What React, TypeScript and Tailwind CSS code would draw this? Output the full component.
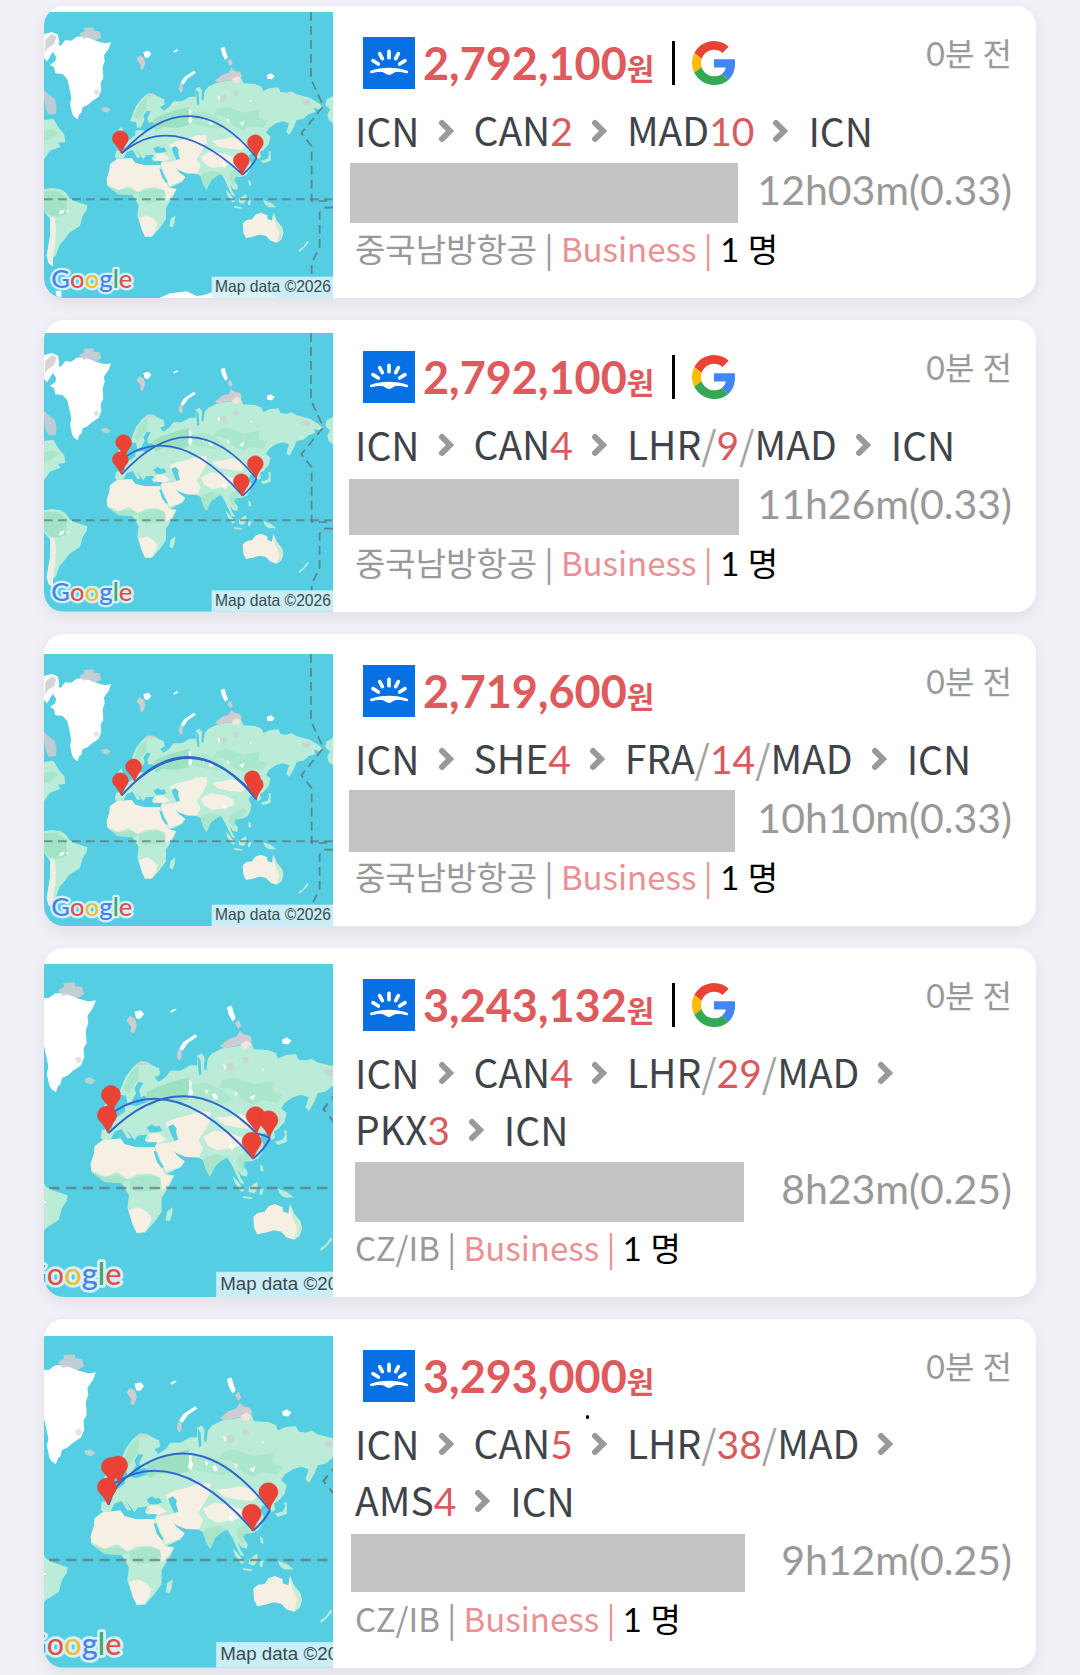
import React from 'react';

type Point = [number, number];

interface Stop {
    code: string;
    days?: string;
    next?: string;
}

interface Offer {
    id: number;
    price: string;
    google: boolean;
    stops: Stop[];
    duration: string;
    airline: string;
    bar: string;
    map: {
        viewBox: string;
        pins: Point[];
        arcs: string[];
    };
    speck?: boolean;
}

const MAD: Point = [271, 418];
const LHR: Point = [281, 367];
const ICN: Point = [676, 430];
const CAN: Point = [634, 484];

const MAD_ICN = 'M275 462Q483 232 680 475';
const MAD_CAN = 'M275 462Q430 330 638 526';
const LHR_CAN = 'M285 410Q444 305 638 526';
const CAN_ICN = 'M638 526Q664 505 680 475';

const OFFERS: Offer[] = [
    {
        id: 1,
        price: '2,792,100',
        google: true,
        stops: [{ code: 'ICN' }, { code: 'CAN', days: '2' }, { code: 'MAD', days: '10' }, { code: 'ICN' }],
        duration: '12h03m(0.33)',
        airline: '중국남방항공',
        bar: 'ml-px w-[388px] h-[60px]',
        map: { viewBox: '0 0 867 858', pins: [MAD, ICN, CAN], arcs: [MAD_ICN, MAD_CAN, CAN_ICN] },
    },
    {
        id: 2,
        price: '2,792,100',
        google: true,
        stops: [{ code: 'ICN' }, { code: 'CAN', days: '4' }, { code: 'LHR', days: '9', next: 'MAD' }, { code: 'ICN' }],
        duration: '11h26m(0.33)',
        airline: '중국남방항공',
        bar: 'w-[390px] h-[56px]',
        map: { viewBox: '0 0 867 836', pins: [LHR, MAD, ICN, CAN], arcs: [MAD_ICN, LHR_CAN, CAN_ICN] },
    },
    {
        id: 3,
        price: '2,719,600',
        google: false,
        stops: [{ code: 'ICN' }, { code: 'SHE', days: '4' }, { code: 'FRA', days: '14', next: 'MAD' }, { code: 'ICN' }],
        duration: '10h10m(0.33)',
        airline: '중국남방항공',
        bar: 'w-[386px] h-[62px]',
        map: {
            viewBox: '0 0 867 816',
            pins: [[311, 377], MAD, [667, 412], ICN],
            arcs: [MAD_ICN, 'M275 462Q484 230 678 473', 'M315 421Q484 256 671 457'],
        },
    },
    {
        id: 4,
        price: '3,243,132',
        google: true,
        stops: [
            { code: 'ICN' },
            { code: 'CAN', days: '4' },
            { code: 'LHR', days: '29', next: 'MAD' },
            { code: 'PKX', days: '3' },
            { code: 'ICN' },
        ],
        duration: '8h23m(0.25)',
        airline: 'CZ/IB',
        bar: 'ml-[6px] w-[389px] h-[60px]',
        map: {
            viewBox: '71 0 725 836',
            pins: [LHR, MAD, [644, 420], ICN, CAN],
            arcs: ['M275 462Q463 276 648 464', 'M648 464Q664 466 680 475', LHR_CAN, CAN_ICN],
        },
    },
    {
        id: 5,
        price: '3,293,000',
        google: false,
        stops: [
            { code: 'ICN' },
            { code: 'CAN', days: '5' },
            { code: 'LHR', days: '38', next: 'MAD' },
            { code: 'AMS', days: '4' },
            { code: 'ICN' },
        ],
        duration: '9h12m(0.25)',
        airline: 'CZ/IB',
        bar: 'ml-[2px] w-[394px] h-[58px]',
        map: {
            viewBox: '71 0 725 832',
            pins: [[299, 363], LHR, MAD, ICN, CAN],
            arcs: ['M275 462Q284 430 302 408', 'M300 410Q489 228 680 475', LHR_CAN, CAN_ICN],
        },
        speck: true,
    },
];

const World: React.FC = () => (
    <g>
        <g fill="#bbecd8">
            {/* Europe and Asia */}
            <path d="M300 366L308 345 318 320 335 298 352 283 370 283 385 292 402 300 404 316 390 322 400 334 418 322 430 306 455 306 480 292 497 292 497 268 508 262 516 272 514 300 520 306 524 276 535 262 560 250 590 245 634 238 640 252 675 254 695 262 700 275 720 266 745 264 752 278 770 280 785 276 800 285 840 295 868 313 878 322 868 330 852 325 856 338 835 345 820 358 800 362 792 382 778 407 769 398 777 372 758 366 738 372 718 385 708 400 722 412 716 435 700 452 690 458 693 474 683 480 676 462 660 464 656 476 664 490 660 512 650 526 636 532 616 534 612 542 624 560 622 572 608 568 600 554 606 574 616 590 606 588 592 560 586 545 572 522 560 530 544 542 536 552 530 572 520 556 512 530 500 524 470 522 445 512 436 504 446 518 466 532 456 548 418 566 410 552 390 512 392 495 398 484 372 486 366 478 372 466 348 468 340 480 330 466 318 452 332 474 322 476 308 452 290 458 280 478 262 480 255 474 258 454 284 452 285 438 273 434 300 420 316 408 316 394 330 392 345 394 370 386 376 374 364 368 356 372 352 356 362 336 350 334 340 350 344 362 332 384 322 386 318 368Z" />
            <path d="M264 392L274 382 282 400 288 416 276 422 262 416Z" />
            {/* Africa */}
            <path d="M240 495L260 480 305 476 315 490 345 498 390 497 395 520 416 564 440 568 430 590 408 625 408 660 390 685 366 712 345 713 335 690 322 650 326 618 308 588 265 585 232 560 230 540 238 515Z" />
            <path d="M422 658L436 648 434 668 428 684 418 680Z" />
            {/* Americas */}
            <path d="M42 362L70 358 86 385 103 405 106 428 84 430 92 442 60 454 42 480Z" />
            <path d="M42 570L66 566 92 570 108 580 118 596 130 604 172 618 170 632 158 650 150 680 118 700 104 720 88 738 78 768 68 776 70 802 56 792 50 770 60 710 64 664 42 635Z" />
            {/* Islands */}
            <path d="M692 484L712 478 718 466 714 456 722 456 722 484 700 492Z" />
            <path d="M586 570L600 584 616 606 608 610 592 588ZM628 598L648 584 650 600 640 614 626 610ZM612 620L636 624 634 628 612 625ZM654 604L664 602 660 618 654 616ZM700 602L722 610 740 624 716 624 704 614Z" />
            <path d="M655 540L662 546 664 560 656 556ZM832 724L836 730 822 746 808 758 806 752 820 742Z" />
            <path d="M214 326L228 322 242 330 232 340 218 336Z" fill="#b8d6cf" />
            <path d="M890 300L909 290V372L896 362 892 346 900 330 886 318Z" />
        </g>
        <g fill="#95dfbd">
            <path d="M372 360L400 345 440 332 478 322 476 378 440 386 400 382 380 394 366 380Z" opacity=".8" />
            <path d="M560 330L590 322 640 340 690 330 686 356 712 366 700 386 660 380 640 392 610 378 580 350 550 348Z" opacity=".45" />
            <path d="M484 340L520 336 560 352 590 380 560 388 520 380 484 372Z" opacity=".35" />
            <path d="M42 576L80 574 112 596 108 620 118 640 86 652 60 648 42 634Z" opacity=".7" />
            <path d="M326 580L360 568 400 570 412 580 390 606 350 610 330 604Z" opacity=".5" />
            <path d="M42 395L70 390 84 400 60 420 42 425Z" opacity=".5" />
            <path d="M330 310L352 292 348 330 326 362 312 350Z" opacity=".5" />
            <path d="M600 520L640 500 650 514 620 536 612 560 596 540Z" opacity=".4" />
            <path d="M232 562L262 572 300 568 328 580 308 588 265 585Z" opacity=".5" />
        </g>
        <g fill="#f5efe4">
            <path d="M240 495L260 480 305 476 315 490 345 498 390 497 395 520 410 552 418 566 438 570 428 586 410 606 404 574 380 564 346 566 322 578 296 560 266 572 232 556 230 540 238 515Z" />
            <path d="M326 656L350 648 372 660 382 674 378 690 366 710 346 712 336 692Z" />
            <path d="M394 490L420 478 400 462 372 466 380 474 366 482 398 486 392 496 402 520 418 560 456 546 466 534 446 518 436 504 445 512 470 522 502 522 512 500 500 480 520 450 530 430 530 408 500 408 474 418 440 426 418 436 424 452 434 448 448 462 448 480 430 486Z" />
            <path d="M545 424L580 420 604 414 640 424 650 440 634 452 600 448 566 442ZM512 472L540 456 580 462 610 474 612 492 584 500 548 506 524 494Z" />
            <path d="M60 652L74 656 78 690 76 730 70 766 68 800 56 792 50 770 60 710Z" opacity=".9" />
            <path d="M638 672L650 662 666 660 676 646 692 640 712 648 712 658 726 664 730 640 740 664 756 684 760 700 754 720 740 730 722 724 708 710 690 706 668 712 648 716 640 700Z" />
        </g>
        <path d="M730 640L740 664 756 684 760 700 754 720 740 730 748 700 736 674Z" fill="#cdebd2" />
        <path d="M512 530L520 522 548 514 574 524 560 530 544 542 530 572 520 556Z" fill="#a9e6c9" />
        {/* Inland seas */}
        <g fill="#55cde3">
            <path d="M370 448L384 440 392 446 402 444 410 456 396 460 378 460Z" />
            <path d="M424 446L436 440 446 450 444 462 450 478 440 482 432 466Z" />
            <path d="M388 508L394 508 404 532 414 548 408 550 396 534Z" />
            <path d="M498 270L506 280 508 314 502 318 500 300Z" />
        </g>
        {/* Ice and bare rock */}
        <g fill="#fff">
            <path d="M72 142L84 134 92 140 106 122 124 124 140 112 165 110 200 125 225 132 243 129 236 148 222 168 224 186 218 204 220 236 212 250 214 272 206 292 186 306 172 318 158 324 154 340 148 344 143 360 132 352 126 342 120 312 124 296 118 266 112 240 98 224 76 222 72 204 60 196 76 186 78 172 70 160Z" />
            <path d="M42 104L66 98 84 106 88 130 74 150 62 168 52 186 42 176Z" />
            <path d="M340 158L356 154 364 164 354 176 344 174ZM572 146L584 142 588 158 594 174 586 182 576 164ZM710 228L722 222 734 230 726 240 712 238ZM430 156L440 150 446 153 432 160Z" />
            <path d="M452 250L462 234 492 214 498 220 474 236 460 256Z" />
            <path d="M476 328L484 334 482 350 488 360 482 374 474 366 478 350ZM516 352L526 356 520 366ZM534 364L544 362 550 376 540 378ZM590 356L600 362 594 370ZM628 372L644 364 638 380ZM660 300L666 304 660 308ZM580 486L592 498 584 506 576 496ZM562 288L572 294 566 304ZM90 634L104 630 100 642 86 646ZM108 632L120 634 112 642Z" opacity=".85" />
            <path d="M388 896L420 882 470 876 500 890 520 888 548 878 640 874 720 880 740 896ZM76 874L94 874V896L80 890Z" />
        </g>
        <g fill="#cfcdd2">
            <path d="M148 104L164 94 160 86 190 84 192 94 208 96 214 114 196 124 176 114 160 118Z" opacity=".9" />
            <path d="M46 122L66 104 80 112 72 134 54 146 44 160ZM42 272L60 288 74 298 80 322 78 344 56 346 48 330 42 300Z" opacity=".85" />
            <path d="M320 180L328 168 342 176 346 192 338 212 330 208 332 196ZM592 186L602 178 608 194 600 200ZM446 270L450 252 458 256 458 274 452 280Z" />
            <path d="M555 244L576 226 596 220 604 206 614 214 630 218 636 232 622 240 590 244 566 250Z" />
            <path d="M568 292L586 284 592 298 580 308ZM610 274L622 270 628 284 616 290ZM816 304L836 300 844 310 830 320 818 314ZM340 292L356 281 376 284 370 292 354 290Z" opacity=".7" />
            <path d="M190 274L204 270 208 284 196 288Z" opacity=".6" />
        </g>
        <path d="M606 240L620 230 634 236 626 250 612 252Z" fill="#f2e3dc" />
        {/* Equator and date line */}
        <g fill="none" stroke="#5f7478" strokeDasharray="26 16">
            <path d="M42 600H909" strokeWidth="6" opacity=".7" />
            <path d="M843 38V240L880 320 814 402 845 440V605H905" strokeWidth="5" opacity=".85" />
            <path d="M909 625H882L869 640V742L845 792V838" strokeWidth="5" opacity=".85" />
        </g>
    </g>
);

const RouteMap: React.FC<{ map: Offer['map'] }> = ({ map }) => {
    const height = Number(map.viewBox.split(' ')[3]);

    return (
        <svg viewBox={map.viewBox} className="block w-full" role="img" aria-label="Route map">
            <rect width="867" height={height} fill="#55cde3" />
            <g transform="translate(-42 -38)">
                <World />
                <g fill="none" stroke="#2f66cf" strokeWidth="5">
                    {map.arcs.map((arc) => (
                        <path key={arc} d={arc} />
                    ))}
                </g>
                {map.pins.map(([x, y]) => (
                    <path
                        key={`${x}-${y}`}
                        transform={`translate(${x} ${y})`}
                        d="M0-24C13-24 24-13 24 0C24 13 12 17 4 42Q3 46 1 42C-9 17-24 14-24 0C-24-13-13-24 0-24Z"
                        fill="#ea4335"
                        stroke="#d23a30"
                        strokeWidth="1"
                    />
                ))}
            </g>
            <g transform={`translate(0 ${height})`}>
                <text
                    x="22"
                    y="-31"
                    fontSize="77"
                    fontWeight="500"
                    fontFamily="Lato, sans-serif"
                    stroke="#d3f1f8"
                    strokeWidth="14"
                    strokeLinejoin="round"
                    paintOrder="stroke"
                >
                    <tspan fill="#4a80e8">G</tspan>
                    <tspan fill="#df5147">o</tspan>
                    <tspan fill="#efbd33">o</tspan>
                    <tspan fill="#4a80e8">g</tspan>
                    <tspan fill="#48a561">l</tspan>
                    <tspan fill="#df5147">e</tspan>
                </text>
                <rect x="503" y="-64" width="364" height="64" fill="#d6f2f8" opacity=".9" />
                <text x="513" y="-18" fontSize="47" fontFamily="'Liberation Sans', sans-serif" fill="#3f4a4d">
                    Map data ©2026
                </text>
            </g>
        </svg>
    );
};

const SunriseLogo: React.FC = () => (
    <svg viewBox="0 0 156 156" className="w-[52px] h-[52px] shrink-0" aria-hidden="true">
        <rect width="156" height="156" fill="#0770e3" />
        <g stroke="#fff" strokeWidth="11" strokeLinecap="round" fill="none">
            <path d="M78 43V62M50 50L58 65M106 50L98 65M30 71L46 81M126 71L110 81" />
        </g>
        <path
            d="M21 102C40 95 58 92 78 92S116 95 135 102Q137 109 131 109C118 106 106 104 96 106L82 113Q78 115 74 113L60 106C50 104 38 106 26 109Q20 110 21 102Z"
            fill="#fff"
        />
    </svg>
);

const GoogleLogo: React.FC = () => (
    <svg viewBox="0 0 48 48" className="w-11 h-11 shrink-0" role="img" aria-label="Google">
        <path fill="#EA4335" d="M24 9.5c3.54 0 6.71 1.22 9.21 3.6l6.85-6.85C35.9 2.38 30.47 0 24 0 14.62 0 6.51 5.38 2.56 13.22l7.98 6.19C12.43 13.72 17.74 9.5 24 9.5z" />
        <path fill="#4285F4" d="M46.98 24.55c0-1.57-.15-3.09-.38-4.55H24v9.02h12.94c-.58 2.96-2.26 5.48-4.78 7.18l7.73 6c4.51-4.18 7.09-10.36 7.09-17.65z" />
        <path fill="#FBBC05" d="M10.53 28.59c-.48-1.45-.76-2.99-.76-4.59s.27-3.14.76-4.59l-7.98-6.19C.92 16.46 0 20.12 0 24c0 3.88.92 7.54 2.56 10.78l7.97-6.19z" />
        <path fill="#34A853" d="M24 48c6.48 0 11.93-2.13 15.89-5.81l-7.73-6c-2.15 1.45-4.92 2.3-8.16 2.3-6.26 0-11.57-4.22-13.47-9.91l-7.98 6.19C6.51 42.62 14.62 48 24 48z" />
    </svg>
);

const Chevron: React.FC = () => (
    <svg viewBox="0 0 16 24" className="w-4 h-6 ml-[18px] mr-5 shrink-0" aria-hidden="true">
        <path d="M4 4L12 12L4 20" fill="none" stroke="#999" strokeWidth="6" strokeLinecap="round" />
    </svg>
);

const Days: React.FC<{ children: React.ReactNode }> = ({ children }) => (
    <span className="font-[Lato,sans-serif] text-[#d9595c]">{children}</span>
);

const OfferCard: React.FC<{ offer: Offer }> = ({ offer }) => (
    <article className="flex overflow-hidden rounded-[20px] bg-white shadow-[0_5px_14px_rgba(40,40,70,0.08)]">
        <div className="w-[289px] shrink-0 self-end">
            <RouteMap map={offer.map} />
        </div>
        <div className="flex-1 min-w-0 pl-4 pr-6 pt-[18px] pb-[21px]">
            <div className="flex items-center h-[78px] pl-[14px]">
                <SunriseLogo />
                <p className="ml-2 font-[Lato,'Noto_Sans_CJK_KR',sans-serif] font-bold text-[45px] leading-none text-[#de5a5c] whitespace-nowrap">
                    {offer.price}
                    <span className="text-[30px]">원</span>
                </p>
                {offer.google && (
                    <>
                        <span className="ml-[18px] mr-[17px] w-[3px] h-11 bg-black" />
                        <GoogleLogo />
                    </>
                )}
                <time className="ml-auto self-start mt-[10px] font-[Lato,'Noto_Sans_CJK_KR',sans-serif] text-[32px] leading-[40px] text-[#999] whitespace-nowrap">
                    0분 전
                </time>
            </div>

            <ul className="relative flex flex-wrap pl-[6px] text-[39px] leading-[57px] text-[#3f444a]">
                {offer.stops.map((stop, index) => (
                    <li key={index} className="flex items-center h-[57px] whitespace-nowrap">
                        <span>
                            {stop.code}
                            {stop.days && !stop.next && <Days>{stop.days}</Days>}
                            {stop.next && (
                                <>
                                    <span className="text-[#a3a3a3]">/</span>
                                    <Days>{stop.days}</Days>
                                    <span className="text-[#a3a3a3]">/</span>
                                    {stop.next}
                                </>
                            )}
                        </span>
                        {index < offer.stops.length - 1 && <Chevron />}
                    </li>
                ))}
                {offer.speck && <li aria-hidden="true" className="absolute left-[237px] top-0 w-[3px] h-1 rounded-full bg-black" />}
            </ul>

            <div className="mt-1 flex items-center justify-between h-[60px]">
                <div className={`${offer.bar} bg-[#c3c3c3]`} />
                <span className="pb-[6px] font-[Lato,sans-serif] text-[41px] leading-[54px] text-[#999]">{offer.duration}</span>
            </div>

            <p className="h-[54px] pl-[6px] text-[33px] leading-[50px] text-[#999] whitespace-nowrap">
                {offer.airline} | <span className="text-[#ea9093]">Business |</span>{' '}
                <span className="font-[Lato,'Noto_Sans_CJK_KR',sans-serif] text-black">1 명</span>
            </p>
        </div>
    </article>
);

const App: React.FC = () => {
    return (
        <main className="min-h-screen flex flex-col gap-[22px] px-11 pt-[6px] pb-[7px] bg-[#f1f0f6] font-['Noto_Sans_CJK_KR',sans-serif]">
            {OFFERS.map((offer) => (
                <OfferCard key={offer.id} offer={offer} />
            ))}
        </main>
    );
};

export default App;
